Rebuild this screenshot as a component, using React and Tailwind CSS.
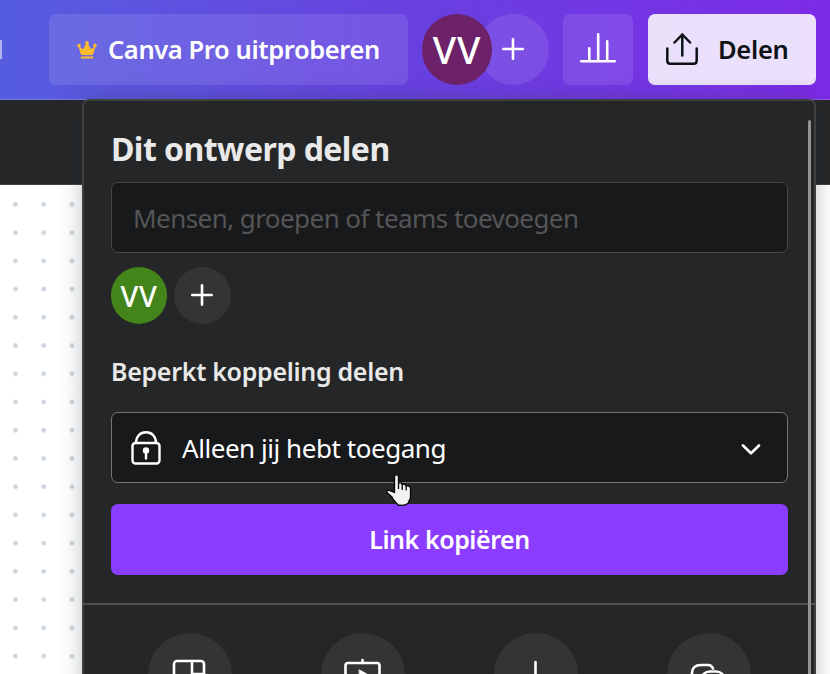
import React from 'react';

function Crown() {
  return (
    <svg className="block h-[18px] w-5 shrink-0" viewBox="0 0 20 18" fill="#fdbc2b">
      <circle cx="10" cy="2" r="1.9" />
      <circle cx="2" cy="4.6" r="1.8" />
      <circle cx="18" cy="4.6" r="1.8" />
      <path d="M1.500 5 6 8.200 9.200 2.500h1.600L14 8.200 18.500 5l-2.100 7.600c-.2.800-.6 1.400-1.400 1.400H5c-.8 0-1.200-.6-1.400-1.400Z" />
      <rect x="3.700" y="15.600" width="12.600" height="1.800" rx=".6" />
    </svg>
  );
}

function Plus() {
  return (
    <svg className="mr-px block size-[22px]" viewBox="0 0 22 22" fill="none" stroke="#fff" strokeWidth="2.600" strokeLinecap="round">
      <path d="M11 1.300v19.400M1.300 11h19.400" />
    </svg>
  );
}

function Header() {
  return (
    <header className="flex h-[100px] shrink-0 items-start border-b border-white/20 bg-linear-to-r from-[#555ddf] via-[#6840e0] to-[#7d2ae8] pt-[14px]">
      <div className="mt-[26px] h-[19px] w-[2px] bg-[#b3b2ef]" />
      <button className="ml-[47px] flex h-[71px] w-[359px] items-center rounded-[7px] bg-white/10 pl-7">
        <Crown />
        <span className="ml-[11px] whitespace-nowrap text-[25.5px] font-semibold tracking-[-0.4px] text-white">Canva Pro uitproberen</span>
      </button>
      <div className="ml-[14px] flex">
        <div className="z-10 flex h-[71px] w-[70px] items-center justify-center rounded-full bg-[#6c2168] text-[38px] font-medium tracking-[1px] text-white">VV</div>
        <div className="-ml-[14px] flex h-[71px] w-[71px] items-center justify-center rounded-full bg-white/10 pb-[2px]">
          <Plus />
        </div>
      </div>
      <button className="ml-[14px] flex h-[71px] w-[70px] items-center justify-center rounded-[7px] bg-white/10 pb-[3px]">
        <svg className="block h-[30px] w-9" viewBox="0 0 36 30" fill="none" stroke="#fff" strokeWidth="2.600" strokeLinecap="round">
          <path d="M1.300 28.200h33.400M9.300 27V15.200M18.200 27V1.300M27.200 27V8.300" />
        </svg>
      </button>
      <button className="ml-[15px] flex h-[71px] w-[168px] items-center rounded-[7px] bg-white/85 pl-[18px]">
        <svg className="mb-[2px] block h-8 w-8 shrink-0" viewBox="0 0 32 32" fill="none" stroke="#0d1216" strokeWidth="2.500" strokeLinecap="round" strokeLinejoin="round">
          <path d="M1.300 15.500v12.200c0 1.800 1.200 3 3 3h23.400c1.800 0 3-1.200 3-3V15.500M16.300 22.500V1.500M8.500 9.500l7.800-8 7.800 8" />
        </svg>
        <span className="ml-5 text-[25.5px] font-semibold tracking-[-0.3px] text-[#0d1216]">Delen</span>
      </button>
    </header>
  );
}

function DotGrid() {
  return (
    <svg className="block h-full w-full">
      <defs>
        <pattern id="dots" x="1.400" y="5.400" width="28.230" height="28.230" patternUnits="userSpaceOnUse">
          <circle cx="14.100" cy="14.100" r="2.300" fill="#cbd3dd" />
        </pattern>
      </defs>
      <rect width="82" height="500" fill="url(#dots)" />
    </svg>
  );
}

function Option({ children }) {
  return (
    <div className="flex h-[85px] w-[84px] items-center justify-center rounded-full bg-[#343436]">
      <svg className="block size-[42px]" viewBox="0 0 42 42" fill="none" stroke="#fff" strokeWidth="2.600" strokeLinecap="round" strokeLinejoin="round">
        {children}
      </svg>
    </div>
  );
}

function SharePanel() {
  return (
    <section className="absolute left-[82px] top-[99px] h-[620px] w-[734px] rounded-t-[7px] border-2 border-[#3f4041] bg-[#252627] pt-6 shadow-[0_0_22px_rgba(40,52,64,0.3)]">
      <div className="pl-[27px] pr-[26px]">
        <h1 className="flex h-12 items-center whitespace-nowrap text-[32px] font-bold tracking-[-0.55px] text-[#e9e9e9]">Dit ontwerp delen</h1>
        <div className="mt-[9px] flex h-[71px] items-center whitespace-nowrap rounded-[7px] border border-[#454647] bg-[#18191b] pl-[21px] pt-px text-[26px] tracking-[-0.56px] text-[#545557]">
          Mensen, groepen of teams toevoegen
        </div>
        <div className="mt-[14px] flex h-[57px] gap-[7px]">
          <div className="flex w-14 items-center justify-center rounded-full bg-[#43841b] pt-px text-[29px] font-medium tracking-[0.7px] text-white">VV</div>
          <div className="flex w-[57px] items-center justify-center rounded-full bg-[#343436] pb-px">
            <Plus />
          </div>
        </div>
        <h2 className="mt-[30px] flex h-9 items-center whitespace-nowrap text-[25px] font-semibold tracking-[-0.3px] text-[#e9e9e9]">Beperkt koppeling delen</h2>
        <div className="mt-[22px] flex h-[71px] items-center rounded-[7px] border border-[#747576] bg-[#18191b] pl-[19px] pr-[26px] text-[26px] text-white">
          <svg className="block h-[34px] w-[30px] shrink-0" viewBox="0 0 30 34" fill="none" stroke="#fff" strokeWidth="2.400" strokeLinejoin="round">
            <rect x="1.500" y="12" width="27" height="20.500" rx="3" />
            <path d="M5 12C5 5.500 9 1.300 15 1.300S25 5.500 25 12" />
            <circle cx="15" cy="19.500" r="2" fill="#fff" />
            <path d="M15 20v7.500" strokeLinecap="round" />
          </svg>
          <span className="ml-[21px] whitespace-nowrap pt-[2px] tracking-[-0.45px]">Alleen jij hebt toegang</span>
          <svg className="ml-auto mt-1 block h-[11px] w-5 shrink-0" viewBox="0 0 20 11" fill="none" stroke="#fff" strokeWidth="2.600" strokeLinecap="round" strokeLinejoin="round">
            <path d="M2 1.500 10 9.300l8-7.800" />
          </svg>
        </div>
        <button className="mt-[21px] flex h-[71px] w-full items-center justify-center rounded-[7px] bg-[#8b3dff] text-[25px] font-semibold tracking-[-0.45px] text-white">
          <span>Link kopiëren</span>
        </button>
      </div>
      <div className="-mx-[2px] mt-7 h-[2px] bg-[#505152]" />
      <div className="ml-[64px] mt-7 flex w-[603px] justify-between">
        <Option>
          <rect x="5" y="6" width="30" height="29" rx="3" />
          <path d="M23 6v29M24 19h11" />
        </Option>
        <Option>
          <rect x="3.500" y="8" width="34" height="22" rx="2.500" />
          <path d="M20.500 8V5" />
          <path d="m17.500 15 8 4.500-8 4.500Z" fill="#fff" strokeWidth="1" />
        </Option>
        <Option>
          <path d="M20.500 7v22M12 21l8.500 8.500L29 21M5 36h31" />
        </Option>
        <Option>
          <path d="M25 13.500C24 11 23 10 20 10H13C7 10 4 13 4 18v3c0 5 3 8 9 8" />
          <path d="M22 16.500h6c5 0 8 3 8 8v3c0 5-3 8-8 8h-6c-5 0-8-3-8-8v-3c0-5 3-8 8-8Z" />
        </Option>
      </div>
      <div className="absolute right-[3px] top-[19px] h-[600px] w-[3px] rounded-full bg-[#929292]" />
    </section>
  );
}

function Pointer() {
  return (
    <svg className="absolute left-[386px] top-[474px] h-[33px] w-[26px]" viewBox="0 0 26 33" fill="#f1f2f2" stroke="#050505" strokeWidth="1.300" strokeLinejoin="round">
      <path d="M8.500 18.500V2.500C8.500.3 12.500.3 12.500 2.500v6.800c1.500-1 3.500-.3 3.500 1.200 1.500-.8 3.800-.2 4 1.500 2-.6 4.500.3 4.500 2.500v8.500c0 2.500-2 4-2.500 6.500-3 2.200-7 2.200-10 1.500-2-2.500-5-4.500-6-8L1 18.500c-.6-1.800 1.200-2.800 3-1.800Z" />
      <path d="M12.500 9.300V15M16.200 10.500V16M20.200 12v4.500" fill="none" />
    </svg>
  );
}

export default function App() {
  return (
    <div className="relative flex h-[674px] w-[830px] flex-col overflow-hidden bg-white font-['Noto_Sans',sans-serif]">
      <Header />
      <div className="h-[85px] shrink-0 border-b border-[#404142] bg-[#252627]" />
      <main className="min-h-0 flex-1">
        <DotGrid />
      </main>
      <SharePanel />
      <Pointer />
    </div>
  );
}
